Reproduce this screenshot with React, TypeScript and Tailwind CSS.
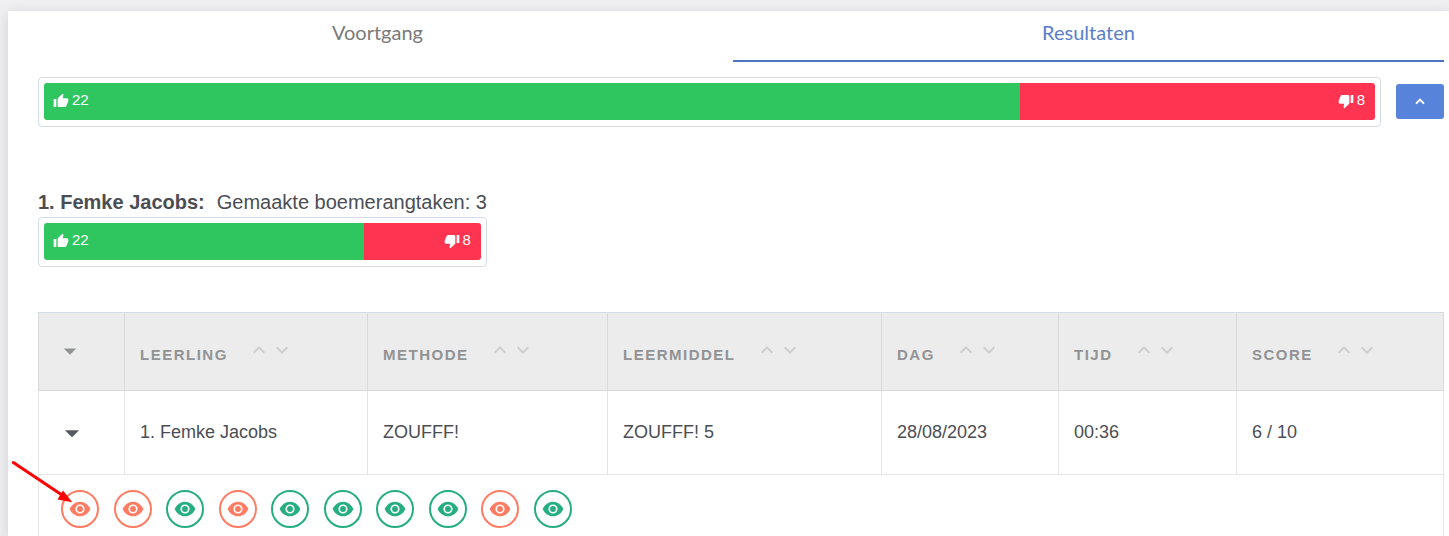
import { useState } from "react";
import {
  MdArrowDropDown,
  MdKeyboardArrowDown,
  MdKeyboardArrowUp,
  MdThumbDown,
  MdThumbUp,
  MdVisibility,
} from "react-icons/md";

const tabs = ["Voortgang", "Resultaten"];

const columns = [
  { label: "Leerling", width: "w-[243px]" },
  { label: "Methode", width: "w-[240px]" },
  { label: "Leermiddel", width: "w-[274px]" },
  { label: "Dag", width: "w-[177px]" },
  { label: "Tijd", width: "w-[178px]" },
  { label: "Score", width: "" },
];

const row = ["1. Femke Jacobs", "ZOUFFF!", "ZOUFFF! 5", "28/08/2023", "00:36", "6 / 10"];

const answers = [false, false, true, false, true, true, true, true, false, true];

const ScoreBar = ({ good, bad }: { good: number; bad: number }) => {
  return (
    <div className="w-full rounded border border-[#d3dce3] px-[5px] pt-[5px] pb-[6px]">
      <div className="flex h-[37px] overflow-hidden rounded-[3px] text-[15px] text-white">
        <div
          className="flex items-center gap-[3px] bg-[#2fc65f] pb-[2px] pl-[9px]"
          style={{ width: `${(good / (good + bad)) * 100}%` }}
        >
          <MdThumbUp size={16} />
          <span>{good}</span>
        </div>
        <div className="flex flex-1 items-center justify-end gap-[3px] bg-[#ff3450] pr-[10px] pb-[2px]">
          <MdThumbDown size={16} />
          <span>{bad}</span>
        </div>
      </div>
    </div>
  );
};

const ColumnHeader = ({ label, width }: { label: string; width: string }) => {
  return (
    <th className={`${width} border border-[#dadada] border-t-[#d3dce6] pl-[15px] text-left`}>
      <div className="flex items-center">
        <span className="pt-2 text-[15px] font-bold uppercase tracking-widest text-[#919395]">
          {label}
        </span>
        <div className="ml-5 flex pb-1 text-[#cecece]">
          <button aria-label={`${label} oplopend`} className="flex w-[23px] justify-center">
            <MdKeyboardArrowUp size={24} className="shrink-0" />
          </button>
          <button aria-label={`${label} aflopend`} className="flex w-[23px] justify-center">
            <MdKeyboardArrowDown size={24} className="shrink-0" />
          </button>
        </div>
      </div>
    </th>
  );
};

const App = () => {
  const [active, setActive] = useState("Resultaten");

  return (
    <div className="relative flex min-h-screen flex-col overflow-hidden bg-[#f0f0f2] pt-[11px] pl-2 font-['Liberation_Sans',Arial,sans-serif] text-[#4a4e54]">
      <main className="flex-1 bg-white pr-[5px] pl-[14px] shadow-[0_3px_14px_rgba(0,0,0,0.14)]">
        <div role="tablist" className="grid grid-cols-2">
          {tabs.map((tab) => (
            <button
              key={tab}
              role="tab"
              aria-selected={active === tab}
              onClick={() => setActive(tab)}
              className={`flex h-[51px] justify-center border-b-2 pt-[7px] font-['Lato',sans-serif] text-xl leading-7 ${
                active === tab ? "border-[#4c74c4] text-[#5a7ec8]" : "border-transparent text-[#7a7a7a]"
              }`}
            >
              {tab}
            </button>
          ))}
        </div>

        <div className="pl-4">
          <div className="mt-[15px] flex items-start gap-[15px]">
            <ScoreBar good={22} bad={8} />
            <button
              aria-label="Inklappen"
              className="mt-[7px] flex h-[35px] w-12 shrink-0 items-center justify-center rounded-[3px] bg-[#5883db] text-white"
            >
              <svg width="10" height="7" viewBox="0 0 10 7" fill="none" aria-hidden="true">
                <path d="M1 5.6L5 1.6L9 5.6" stroke="currentColor" strokeWidth="2" />
              </svg>
            </button>
          </div>

          <section className="mt-[60px] w-fit">
            <h2 className="flex gap-3 text-xl leading-[30px]">
              <b>1. Femke Jacobs:</b>
              <span>Gemaakte boemerangtaken: 3</span>
            </h2>
            <ScoreBar good={22} bad={8} />
          </section>

          <table className="mt-[45px] w-full table-fixed border-collapse">
            <thead className="bg-[#ececec]">
              <tr className="h-[78px]">
                <th className="w-[86px] border border-[#dadada] border-t-[#d3dce6] pb-[2px]">
                  <button aria-label="Alles openen" className="ml-4 flex text-[#919395]">
                    <MdArrowDropDown size={30} />
                  </button>
                </th>
                {columns.map((column) => (
                  <ColumnHeader key={column.label} {...column} />
                ))}
              </tr>
            </thead>
            <tbody>
              <tr className="h-[84px] text-lg">
                <td className="border border-[#e6e6e6]">
                  <button aria-label="Rij openen" className="ml-4 flex text-[#56595d]">
                    <MdArrowDropDown size={34} />
                  </button>
                </td>
                {row.map((value) => (
                  <td key={value} className="border border-[#e6e6e6] pb-[2px] pl-[15px]">
                    {value}
                  </td>
                ))}
              </tr>
              <tr>
                <td colSpan={7} className="border-x border-[#e6e6e6] pt-[15px] pb-2 pl-[22px]">
                  <div className="flex max-w-[511px] justify-between">
                    {answers.map((correct, index) => (
                      <button
                        key={index}
                        aria-label={`Bekijk vraag ${index + 1}`}
                        className={`flex size-[38px] items-center justify-center rounded-full border-2 ${
                          correct ? "border-[#27ae80] text-[#27ae80]" : "border-[#ff7b62] text-[#ff7b62]"
                        }`}
                      >
                        <svg width="22" height="22" viewBox="0 0 24 24" aria-hidden="true">
                          <path
                            fill="currentColor"
                            d="M12 4C7 4 2.7 7.4 .7 12c2 4.6 6.3 8 11.3 8s9.300-3.400 11.300-8C21.300 7.400 17 4 12 4Z"
                          />
                          <circle cx="12" cy="12" r="4.100" fill="none" stroke="#fff" strokeWidth="1.800" />
                        </svg>
                      </button>
                    ))}
                  </div>
                </td>
              </tr>
            </tbody>
          </table>
        </div>
      </main>

      {/* pointer to the first answer */}
      <svg
        className="pointer-events-none absolute top-[458px] left-[8px]"
        width="68"
        height="48"
        aria-hidden="true"
      >
        <path d="M5.3 4.500L54 37" stroke="#ff0000" strokeWidth="3" strokeLinecap="round" />
        <path d="M64.300 44.200L49.500 41.500L55 32.500Z" fill="#ff0000" />
      </svg>
    </div>
  );
};

export default App;
